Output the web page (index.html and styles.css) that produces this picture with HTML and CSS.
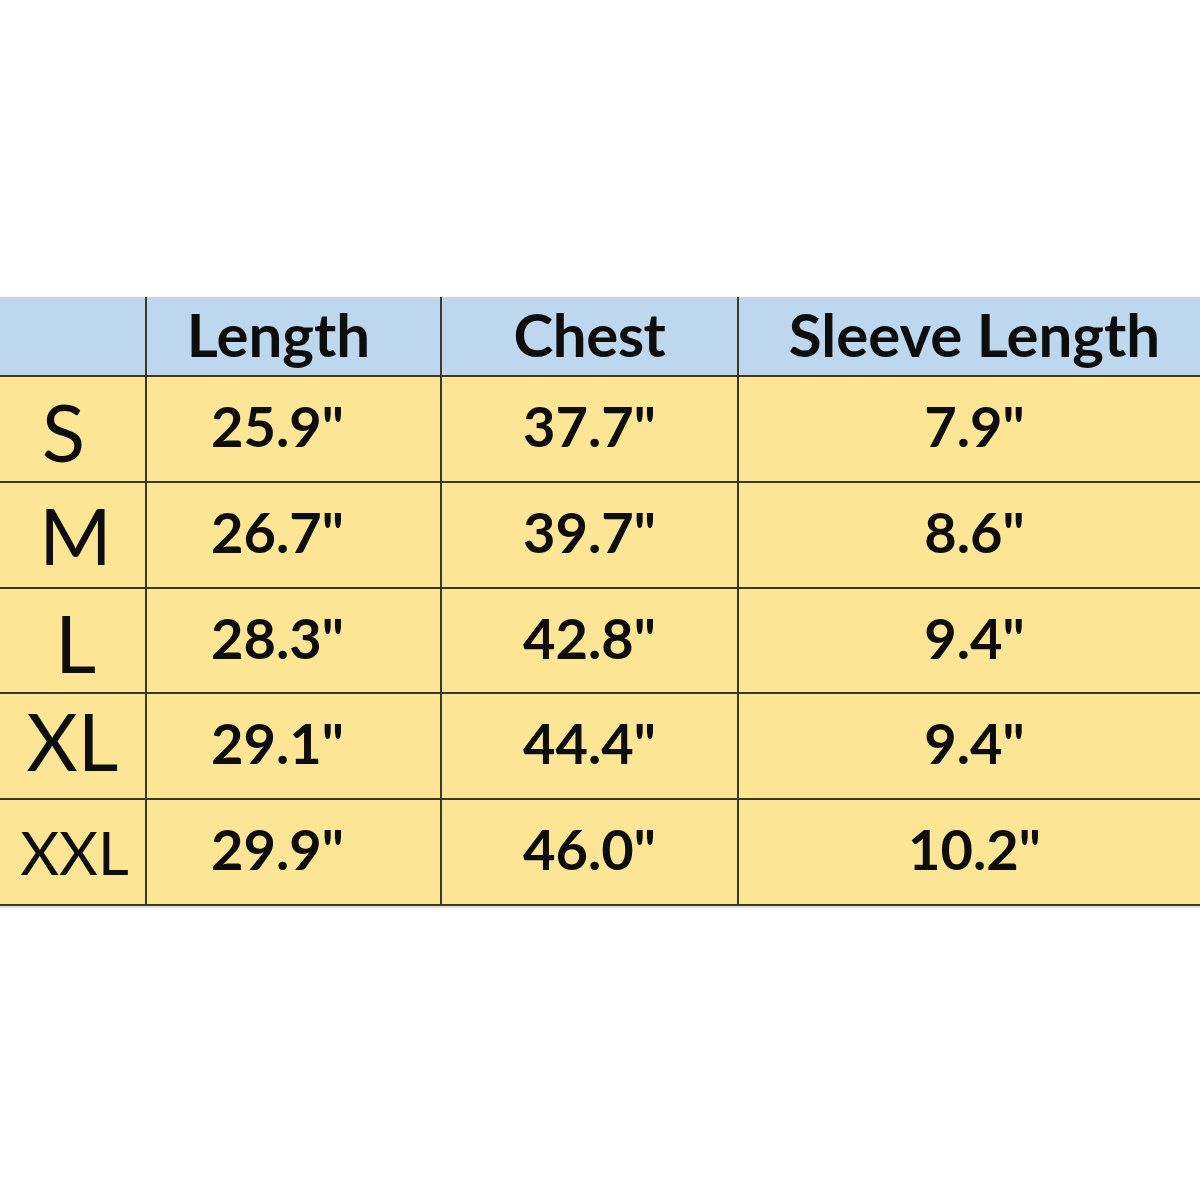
FILE: index.html
```html
<!DOCTYPE html>
<html>
<head>
<meta charset="utf-8">
<link rel="stylesheet" href="styles.css">
</head>
<body>
<div class="page">
  <div class="chart">
    <div class="cell head c0"></div>
    <div class="cell head c1">Length</div>
    <div class="cell head c2">Chest</div>
    <div class="cell head c3">Sleeve Length</div>

    <div class="cell size s-s">S</div>
    <div class="cell val c1">25.9"</div>
    <div class="cell val c2">37.7"</div>
    <div class="cell val c3">7.9"</div>

    <div class="cell size s-m">M</div>
    <div class="cell val c1">26.7"</div>
    <div class="cell val c2">39.7"</div>
    <div class="cell val c3">8.6"</div>

    <div class="cell size s-l">L</div>
    <div class="cell val c1">28.3"</div>
    <div class="cell val c2">42.8"</div>
    <div class="cell val c3">9.4"</div>

    <div class="cell size s-xl">XL</div>
    <div class="cell val c1">29.1"</div>
    <div class="cell val c2">44.4"</div>
    <div class="cell val c3">9.4"</div>

    <div class="cell size s-xxl">XXL</div>
    <div class="cell val c1">29.9"</div>
    <div class="cell val c2">46.0"</div>
    <div class="cell val c3">10.2"</div>
  </div>
</div>
</body>
</html>
```

FILE: styles.css
```css
html, body {
  margin: 0;
  padding: 0;
  background: #ffffff;
}

.page {
  width: 1200px;
  height: 1200px;
  padding-top: 297px;
  box-sizing: border-box;
}

.chart {
  display: grid;
  grid-template-columns: 145px 295px 297px 463px;
  grid-template-rows: 78px 106px 106px 105px 106px 106px;
  background: #fde596;
  border-bottom: 2px solid #3c382a;
  box-shadow: 0 2px 1px rgba(0, 0, 0, 0.12);
  font-family: Lato, "Open Sans", sans-serif;
  color: #0d0d0d;
}

.cell {
  display: flex;
  align-items: center;
  justify-content: center;
  box-sizing: border-box;
  border-left: 2px solid #3c382a;
  border-top: 2px solid #3c382a;
  line-height: 1;
}

.c0, .size {
  border-left: none;
}

.head {
  background: #bdd7ee;
  border-top: none;
  font-weight: 700;
  font-size: 60px;
  padding-bottom: 4px;
}

.head.c1 {
  padding-right: 30px;
}

.head.c2 {
  letter-spacing: -0.5px;
}

.head.c3 {
  padding-left: 10px;
}

.val {
  font-weight: 700;
  font-size: 56px;
  padding-bottom: 6px;
}

.val.c1 {
  padding-right: 32px;
}

.val.c3 {
  padding-left: 10px;
}

.size {
  font-weight: 400;
}

.s-s {
  font-size: 80px;
  padding-right: 18px;
  padding-top: 4px;
}

.s-m {
  font-size: 78px;
  padding-left: 6px;
}

.s-l {
  font-size: 80px;
  padding-left: 6px;
  padding-top: 2px;
}

.s-xl {
  font-size: 79px;
  padding-bottom: 12px;
}

.s-xxl {
  font-size: 60px;
  padding-left: 4px;
}
```
